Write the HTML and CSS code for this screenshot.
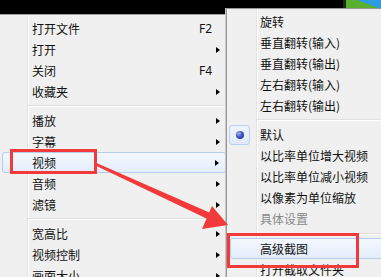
FILE: index.html
```html
<!DOCTYPE html>
<html>
<head>
<meta charset="utf-8">
<link rel="stylesheet" href="styles.css">
</head>
<body>
<div class="screen">
  <svg class="wallpaper" viewBox="0 0 38 14" width="38" height="14">
    <rect x="0" y="0" width="38" height="14" fill="#2b9be2"/>
    <polygon points="0,0 14,0 38,9 38,14 0,14" fill="#5aaf2c"/>
    <rect x="0" y="0" width="3" height="14" fill="#1d2a12"/>
  </svg>

  <div class="menu main">
    <div class="item"><span class="gut"></span><span class="label">打开文件</span><span class="key">F2</span></div>
    <div class="item"><span class="gut"></span><span class="label">打开</span><span class="arrow"></span></div>
    <div class="item"><span class="gut"></span><span class="label">关闭</span><span class="key">F4</span></div>
    <div class="item"><span class="gut"></span><span class="label">收藏夹</span><span class="arrow"></span></div>
    <div class="sep"></div>
    <div class="item"><span class="gut"></span><span class="label">播放</span><span class="arrow"></span></div>
    <div class="item"><span class="gut"></span><span class="label">字幕</span><span class="arrow"></span></div>
    <div class="item hot"><span class="gut"></span><span class="label">视频</span><span class="arrow"></span></div>
    <div class="item"><span class="gut"></span><span class="label">音频</span><span class="arrow"></span></div>
    <div class="item"><span class="gut"></span><span class="label">滤镜</span><span class="arrow"></span></div>
    <div class="sep"></div>
    <div class="item"><span class="gut"></span><span class="label">宽高比</span><span class="arrow"></span></div>
    <div class="item"><span class="gut"></span><span class="label">视频控制</span><span class="arrow"></span></div>
    <div class="item"><span class="gut"></span><span class="label">画面大小</span><span class="arrow"></span></div>
  </div>

  <div class="menu submenu">
    <div class="item"><span class="gut"></span><span class="label">旋转</span></div>
    <div class="item"><span class="gut"></span><span class="label">垂直翻转(输入)</span></div>
    <div class="item"><span class="gut"></span><span class="label">垂直翻转(输出)</span></div>
    <div class="item"><span class="gut"></span><span class="label">左右翻转(输入)</span></div>
    <div class="item"><span class="gut"></span><span class="label">左右翻转(输出)</span></div>
    <div class="sep"></div>
    <div class="item"><span class="gut"><span class="check"><span class="dot"></span></span></span><span class="label">默认</span></div>
    <div class="item"><span class="gut"></span><span class="label">以比率单位增大视频</span></div>
    <div class="item"><span class="gut"></span><span class="label">以比率单位减小视频</span></div>
    <div class="item"><span class="gut"></span><span class="label">以像素为单位缩放</span></div>
    <div class="item disabled"><span class="gut"></span><span class="label">具体设置</span></div>
    <div class="sep tall"></div>
    <div class="item hot"><span class="gut"></span><span class="label">高级截图</span></div>
    <div class="item"><span class="gut"></span><span class="label">打开截取文件夹</span></div>
  </div>

  <svg class="annot" viewBox="0 0 381 277" width="381" height="277">
    <rect x="11.5" y="150.5" width="84" height="22" fill="none" stroke="#f23a3a" stroke-width="3"/>
    <rect x="228.5" y="234.5" width="129" height="32" fill="none" stroke="#f23a3a" stroke-width="3"/>
    <polygon points="96.5,163 95.5,165.5 207.5,219 210.5,213" fill="#f23a3a"/>
    <polygon points="228,225 212,206 202,229" fill="#f23a3a"/>
  </svg>
</div>
</body>
</html>
```

FILE: styles.css
```css
html, body {
  margin: 0;
  padding: 0;
  background: #000;
}

.screen {
  position: relative;
  width: 381px;
  height: 277px;
  overflow: hidden;
  background: #000;
  font-family: "Noto Sans CJK SC", "Microsoft YaHei", sans-serif;
  font-size: 12px;
  color: #111;
}

.wallpaper {
  position: absolute;
  top: 0;
  right: 0;
  display: block;
}

.menu {
  position: absolute;
  box-sizing: border-box;
  background-color: #f0f0f0;
}

.main {
  left: 0;
  top: 14px;
  width: 240px;
  height: 263px;
  border-top: 1px solid #a0a0a0;
  padding-top: 3px;
  background-image: linear-gradient(to right, transparent 27px, #e2e3e3 27px, #e2e3e3 28px, #ffffff 28px, #ffffff 29px, transparent 29px);
}

.submenu {
  left: 226px;
  top: 8px;
  width: 170px;
  height: 280px;
  border: 1px solid #979797;
  padding-top: 2px;
  background-image: linear-gradient(to right, transparent 29px, #e2e3e3 29px, #e2e3e3 30px, #ffffff 30px, #ffffff 31px, transparent 31px);
  box-shadow: -1px 0 0 #c9c9c9;
}

.item {
  box-sizing: border-box;
  display: flex;
  align-items: center;
  height: 21px;
  line-height: 21px;
  white-space: nowrap;
}

.main .item {
  width: 226px;
  padding-right: 6px;
}

.gut {
  flex: none;
  display: flex;
  align-items: center;
  height: 21px;
}

.main .gut {
  width: 32px;
}

.submenu .gut {
  width: 33px;
}

.label {
  flex: 1;
}

.key {
  margin-right: 8px;
  font-family: "Noto Sans", sans-serif;
}

.arrow {
  width: 0;
  height: 0;
  border-left: 4px solid #000;
  border-top: 3.5px solid transparent;
  border-bottom: 3.5px solid transparent;
}

.hot {
  border: 1px solid #b4cdef;
  border-radius: 3px;
  background: linear-gradient(to bottom, #f3f8fe, #e3edfb);
}

.main .hot {
  margin-left: 2px;
  width: 224px;
}

.main .hot .gut {
  width: 29px;
}

.submenu .hot {
  margin-left: 3px;
}

.submenu .hot .gut {
  width: 29px;
}

.disabled {
  color: #8a8a8a;
}

.sep {
  height: 8px;
  box-sizing: border-box;
  padding-top: 3px;
}

.sep.tall {
  height: 9px;
  padding-top: 4px;
}

.sep::before {
  content: "";
  display: block;
  border-top: 1px solid #e0e0e0;
  border-bottom: 1px solid #ffffff;
}

.main .sep {
  margin-left: 28px;
  width: 198px;
}

.submenu .sep {
  margin-left: 30px;
}

.check {
  box-sizing: border-box;
  display: flex;
  align-items: center;
  justify-content: center;
  width: 21px;
  height: 20px;
  margin-left: 2px;
  border: 1px solid #b9d0ee;
  border-radius: 3px;
  background: linear-gradient(to bottom, #eef4fd, #dfeafa);
}

.dot {
  width: 8px;
  height: 8px;
  border-radius: 50%;
  background: radial-gradient(circle at 35% 32%, #aab6f5 0, #4453c0 45%, #1e2a80 100%);
}

.annot {
  position: absolute;
  left: 0;
  top: 0;
  display: block;
}
```
